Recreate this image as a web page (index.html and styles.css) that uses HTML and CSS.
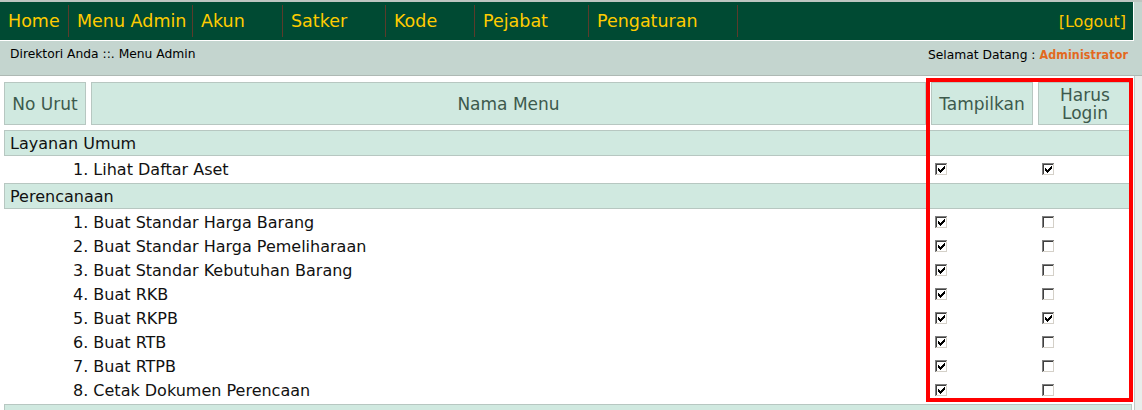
FILE: index.html
```html
<!DOCTYPE html>
<html lang="id">
<head>
<meta charset="utf-8">
<title>Menu Admin</title>
<link rel="stylesheet" href="styles.css">
</head>
<body>
<svg class="defs" width="0" height="0" aria-hidden="true">
  <defs>
    <symbol id="cb-off" viewBox="0 0 13 13">
      <rect x="0" y="0" width="13" height="13" fill="#ffffff"/>
      <rect x="0" y="0" width="12" height="1" fill="#808080"/>
      <rect x="0" y="0" width="1" height="12" fill="#808080"/>
      <rect x="1" y="1" width="10" height="1" fill="#404040"/>
      <rect x="1" y="1" width="1" height="10" fill="#404040"/>
      <rect x="1" y="11" width="11" height="1" fill="#d4d0c8"/>
      <rect x="11" y="1" width="1" height="11" fill="#d4d0c8"/>
    </symbol>
    <symbol id="cb-on" viewBox="0 0 13 13">
      <use href="#cb-off"/>
      <path fill="#000" d="M9 3h1v1h-1z M8 4h2v1h-2z M3 5h1v1h-1z M7 5h3v1h-3z M3 6h2v1h-2z M6 6h3v1h-3z M3 7h5v1h-5z M4 8h3v1h-3z M5 9h1v1h-1z"/>
    </symbol>
  </defs>
</svg>
<div class="page">
  <header class="top">
    <nav class="nav">
      <a class="nav-item">Home</a>
      <a class="nav-item">Menu Admin</a>
      <a class="nav-item">Akun</a>
      <a class="nav-item">Satker</a>
      <a class="nav-item">Kode</a>
      <a class="nav-item">Pejabat</a>
      <a class="nav-item">Pengaturan</a>
      <span class="nav-fill"></span>
      <a class="logout">[Logout]</a>
    </nav>
    <div class="subbar">
      <span class="crumb">Direktori Anda ::. Menu Admin</span>
      <span class="welcome">Selamat Datang : <b class="user">Administrator</b></span>
    </div>
  </header>

  <main class="content">
    <div class="menu-table">
      <div class="thead">
        <div class="th">No Urut</div>
        <div class="th">Nama Menu</div>
        <div class="th">Tampilkan</div>
        <div class="th th-two">Harus<br>Login</div>
      </div>

      <section class="group">
        <div class="group-title">Layanan Umum</div>
        <div class="row">
          <div class="name">1. Lihat Daftar Aset</div>
          <div class="check"><svg class="cb"><use href="#cb-on"/></svg></div>
          <div class="check"><svg class="cb"><use href="#cb-on"/></svg></div>
        </div>
      </section>

      <section class="group">
        <div class="group-title">Perencanaan</div>
        <div class="row">
          <div class="name">1. Buat Standar Harga Barang</div>
          <div class="check"><svg class="cb"><use href="#cb-on"/></svg></div>
          <div class="check"><svg class="cb"><use href="#cb-off"/></svg></div>
        </div>
        <div class="row">
          <div class="name">2. Buat Standar Harga Pemeliharaan</div>
          <div class="check"><svg class="cb"><use href="#cb-on"/></svg></div>
          <div class="check"><svg class="cb"><use href="#cb-off"/></svg></div>
        </div>
        <div class="row">
          <div class="name">3. Buat Standar Kebutuhan Barang</div>
          <div class="check"><svg class="cb"><use href="#cb-on"/></svg></div>
          <div class="check"><svg class="cb"><use href="#cb-off"/></svg></div>
        </div>
        <div class="row">
          <div class="name">4. Buat RKB</div>
          <div class="check"><svg class="cb"><use href="#cb-on"/></svg></div>
          <div class="check"><svg class="cb"><use href="#cb-off"/></svg></div>
        </div>
        <div class="row">
          <div class="name">5. Buat RKPB</div>
          <div class="check"><svg class="cb"><use href="#cb-on"/></svg></div>
          <div class="check"><svg class="cb"><use href="#cb-on"/></svg></div>
        </div>
        <div class="row">
          <div class="name">6. Buat RTB</div>
          <div class="check"><svg class="cb"><use href="#cb-on"/></svg></div>
          <div class="check"><svg class="cb"><use href="#cb-off"/></svg></div>
        </div>
        <div class="row">
          <div class="name">7. Buat RTPB</div>
          <div class="check"><svg class="cb"><use href="#cb-on"/></svg></div>
          <div class="check"><svg class="cb"><use href="#cb-off"/></svg></div>
        </div>
        <div class="row">
          <div class="name">8. Cetak Dokumen Perencaan</div>
          <div class="check"><svg class="cb"><use href="#cb-on"/></svg></div>
          <div class="check"><svg class="cb"><use href="#cb-off"/></svg></div>
        </div>
      </section>

      <section class="group">
        <div class="group-title"></div>
      </section>
    </div>
  </main>

  <div class="highlight"></div>
</div>
</body>
</html>
```

FILE: styles.css
```css
html, body {
  margin: 0;
  padding: 0;
  height: 100%;
  overflow: hidden;
}

body {
  background: #e9edeb;
  font-family: "DejaVu Sans", Verdana, sans-serif;
  color: #111;
}

.defs {
  position: absolute;
  width: 0;
  height: 0;
  overflow: hidden;
}

.page {
  position: relative;
}

/* ---------- header ---------- */
.top {
  background: #c4d5cf;
  border-top: 2px solid #bcc6c1;
  border-bottom: 1px solid #aeb9b4;
}

.nav {
  width: 1133px;
  height: 38px;
  background: #004a33;
  border-right: 1px solid #ffffff;
  border-bottom: 1px solid #ffffff;
  display: grid;
  grid-template-columns: 69px 124px 90px 103px 89px 114px 149px 1fr auto;
  align-items: stretch;
}

.nav-item {
  margin: 3px 0;
  padding-left: 8px;
  border-right: 1px solid #5b3b2b;
  color: #ffcc00;
  font-size: 17.5px;
  display: flex;
  align-items: center;
  white-space: nowrap;
}

.logout {
  color: #ffc700;
  font-size: 16px;
  padding-right: 7px;
  display: flex;
  align-items: center;
}

.subbar {
  height: 28px;
  padding: 6px 14px 0 10px;
  display: flex;
  justify-content: space-between;
  align-items: flex-start;
  font-size: 12.3px;
  line-height: 15px;
  color: #000;
}

.user {
  color: #e2691e;
  font-family: "DejaVu Sans Condensed", "DejaVu Sans", sans-serif;
  font-weight: bold;
  font-size: 12.4px;
  letter-spacing: 0.1px;
}

/* ---------- content ---------- */
.content {
  width: 1130px;
  height: 400px;
  background: #ffffff;
  border-right: 1px solid #c2cac6;
  padding: 6px 0 0 4px;
}

.menu-table {
  width: 1128px;
}

.thead {
  display: grid;
  grid-template-columns: 82px 835px 102px 94px;
  column-gap: 5px;
  margin-bottom: 5px;
}

.th {
  height: 41px;
  background: #d0e9e0;
  border: 1px solid #b7c7c1;
  color: #3d5a4d;
  font-size: 17px;
  line-height: 18px;
  display: flex;
  align-items: center;
  justify-content: center;
  text-align: center;
}

.group {
  margin-bottom: 2px;
}

.group-title {
  height: 24px;
  background: #d0e9e0;
  border: 1px solid #b7c7c1;
  padding-left: 5px;
  font-size: 16px;
  line-height: 25px;
  color: #111;
  margin-bottom: 1px;
}

.row {
  display: grid;
  grid-template-columns: 82px 835px 102px 94px;
  column-gap: 5px;
  height: 24px;
  align-items: center;
}

.name {
  grid-column: 1 / 3;
  padding-left: 69px;
  font-size: 16px;
  line-height: 25px;
  color: #111;
  white-space: nowrap;
}

.check {
  padding-left: 4px;
  height: 13px;
}

.cb {
  display: block;
  width: 13px;
  height: 13px;
}

/* ---------- annotation overlay ---------- */
.highlight {
  position: absolute;
  left: 926px;
  top: 78px;
  width: 207px;
  height: 324px;
  box-sizing: border-box;
  border: 4px solid #ff0000;
  pointer-events: none;
}
```
